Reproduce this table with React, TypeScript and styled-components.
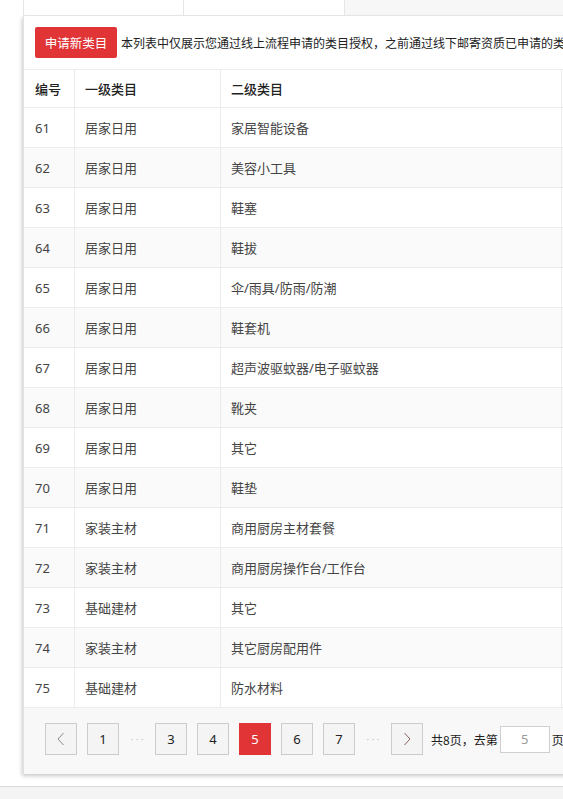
import React from "react";
import styled, { createGlobalStyle } from "styled-components";

const Global = createGlobalStyle`
  html, body { margin: 0; padding: 0; overflow: hidden; background: #fff; }
  body { font-family: "Noto Sans", "Noto Sans CJK SC", sans-serif; color: #333; }
  * { box-sizing: border-box; }
`;

const Page = styled.div`
  width: 563px;
  height: 799px;
  display: flex;
  flex-direction: column;
  overflow: hidden;
`;

const Main = styled.div`
  padding-left: 23px;
  display: flex;
  flex-direction: column;
`;

const TabBar = styled.div`
  height: 16px;
  display: flex;
  background: #f7f7f7;
  border-bottom: 1px solid #ebebeb;
  width: 700px;
`;

const Tab = styled.div`
  width: ${(p: { $w: number }) => p.$w}px;
  background: #fff;
  border-left: 1px solid #e6e6e6;
`;

const TabEnd = styled.div`
  border-left: 1px solid #e6e6e6;
  flex: 1;
`;

const Card = styled.div`
  width: 700px;
  background: #fff;
  border-left: 1px solid #e2e2e2;
  box-shadow: -1px 2px 4px rgba(0, 0, 0, 0.22);
`;

const Toolbar = styled.div`
  height: 53px;
  display: flex;
  align-items: flex-start;
  padding: 11px 0 0 11px;
  gap: 4px;
  white-space: nowrap;
`;

const ApplyButton = styled.button`
  height: 31px;
  width: 82px;
  border: none;
  border-radius: 2px;
  background: #e03437;
  color: #fff;
  font-family: "Noto Sans CJK SC", sans-serif;
  font-size: 12.5px;
  padding: 0;
  cursor: pointer;
`;

const Notice = styled.span`
  font-family: "Noto Sans CJK SC", sans-serif;
  font-size: 12px;
  line-height: 31px;
  color: #222;
`;

const Row = styled.div<{ $head?: boolean; $stripe?: boolean }>`
  display: grid;
  grid-template-columns: 51px 146px 341px 1fr;
  height: ${(p) => (p.$head ? 39 : 40)}px;
  border-top: ${(p) => (p.$head ? "1px solid #ececec" : "none")};
  border-bottom: 1px solid #ececec;
  background: ${(p) => (p.$stripe ? "#fafafa" : "#fff")};
`;

const Cell = styled.div<{ $head?: boolean; $pad?: number }>`
  display: flex;
  align-items: center;
  padding-left: ${(p) => p.$pad ?? 10}px;
  border-right: 1px solid #ececec;
  font-family: "Noto Sans", "Noto Sans CJK SC", sans-serif;
  font-size: 13px;
  color: ${(p) => (p.$head ? "#222" : "#444")};
  font-weight: ${(p) => (p.$head ? 500 : 400)};
  white-space: nowrap;
`;

const Pager = styled.div`
  height: 66px;
  background: #f8f8f8;
  display: flex;
  align-items: flex-start;
  padding: 15px 0 0 21px;
  gap: 10px;
  white-space: nowrap;
`;

const PageBtn = styled.div<{ $active?: boolean }>`
  width: 32px;
  height: 32px;
  display: flex;
  align-items: center;
  justify-content: center;
  border: 1px solid ${(p) => (p.$active ? "#e03437" : "#cccccc")};
  background: ${(p) => (p.$active ? "#e03437" : "#f4f4f4")};
  color: ${(p) => (p.$active ? "#fff" : "#222")};
  font-family: "Noto Sans", sans-serif;
  font-size: 13px;
`;

const Dots = styled.div`
  width: 16px;
  height: 32px;
  display: flex;
  align-items: center;
  justify-content: center;
  color: #b0b0b0;
  font-size: 8px;
  letter-spacing: 3px;
  padding-left: 3px;
`;

const Jump = styled.div`
  display: flex;
  align-items: center;
  height: 32px;
  margin-left: -2px;
  gap: 2px;
  font-family: "Noto Sans CJK SC", sans-serif;
  font-size: 12px;
  color: #222;
`;

const JumpInput = styled.div`
  width: 50px;
  height: 27px;
  border: 1px solid #cfcfcf;
  background: #fff;
  color: #999;
  display: flex;
  align-items: center;
  justify-content: center;
  font-family: "Noto Sans", sans-serif;
  font-size: 13px;
`;

const Gap = styled.div`
  height: 12px;
`;

const Footer = styled.div`
  flex: 1;
  border-top: 1px solid #d6d9de;
  background: #f4f4f4;
`;

const Chevron = ({ dir }: { dir: "left" | "right" }) => (
  <svg width="10" height="14" viewBox="0 0 10 14">
    <path
      d={dir === "left" ? "M7.5 1 L2 7 L7.5 13" : "M2.5 1 L8 7 L2.5 13"}
      fill="none"
      stroke={dir === "left" ? "#8a8a8a" : "#8a6060"}
      strokeWidth="1"
    />
  </svg>
);

const rows: [number, string, string][] = [
  [61, "居家日用", "家居智能设备"],
  [62, "居家日用", "美容小工具"],
  [63, "居家日用", "鞋塞"],
  [64, "居家日用", "鞋拔"],
  [65, "居家日用", "伞/雨具/防雨/防潮"],
  [66, "居家日用", "鞋套机"],
  [67, "居家日用", "超声波驱蚊器/电子驱蚊器"],
  [68, "居家日用", "靴夹"],
  [69, "居家日用", "其它"],
  [70, "居家日用", "鞋垫"],
  [71, "家装主材", "商用厨房主材套餐"],
  [72, "家装主材", "商用厨房操作台/工作台"],
  [73, "基础建材", "其它"],
  [74, "家装主材", "其它厨房配用件"],
  [75, "基础建材", "防水材料"],
];

export default function App() {
  return (
    <Page>
      <Global />
      <Main>
        <TabBar>
          <Tab $w={160} />
          <Tab $w={161} />
          <TabEnd />
        </TabBar>
        <Card>
          <Toolbar>
            <ApplyButton>申请新类目</ApplyButton>
            <Notice>
              本列表中仅展示您通过线上流程申请的类目授权，之前通过线下邮寄资质已申请的类目不在此列表中展示
            </Notice>
          </Toolbar>
          <Row $head>
            <Cell $head $pad={11}>编号</Cell>
            <Cell $head>一级类目</Cell>
            <Cell $head>二级类目</Cell>
            <Cell $head />
          </Row>
          {rows.map(([id, a, b], i) => (
            <Row key={id} $stripe={i % 2 === 1}>
              <Cell $pad={11}>{id}</Cell>
              <Cell>{a}</Cell>
              <Cell>{b}</Cell>
              <Cell />
            </Row>
          ))}
          <Pager>
            <PageBtn>
              <Chevron dir="left" />
            </PageBtn>
            <PageBtn>1</PageBtn>
            <Dots>···</Dots>
            <PageBtn>3</PageBtn>
            <PageBtn>4</PageBtn>
            <PageBtn $active>5</PageBtn>
            <PageBtn>6</PageBtn>
            <PageBtn>7</PageBtn>
            <Dots>···</Dots>
            <PageBtn>
              <Chevron dir="right" />
            </PageBtn>
            <Jump>
              共8页，去第
              <JumpInput>5</JumpInput>
              页
            </Jump>
          </Pager>
        </Card>
      </Main>
      <Gap />
      <Footer />
    </Page>
  );
}
